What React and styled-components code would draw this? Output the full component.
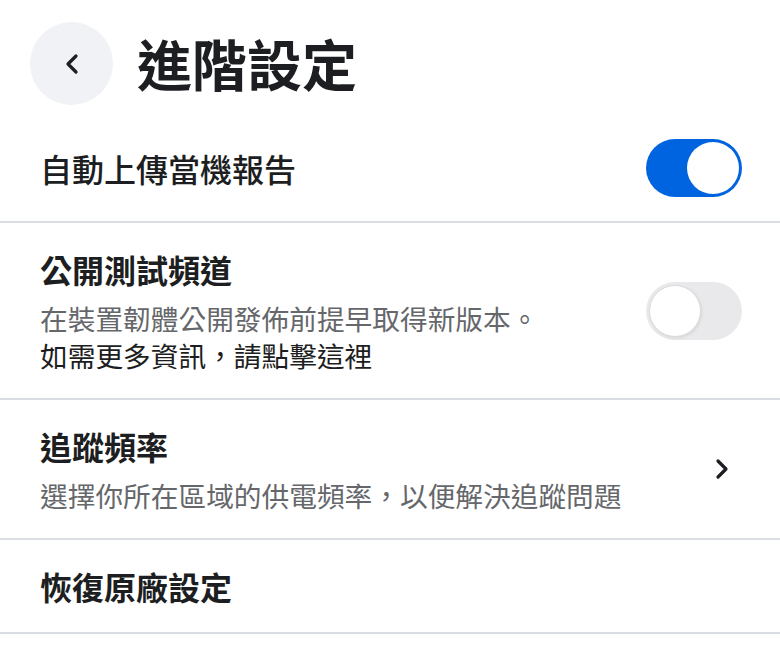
import React from 'react';
import styled, { createGlobalStyle } from 'styled-components';

const GlobalStyle = createGlobalStyle`
  html, body {
    margin: 0;
    padding: 0;
    background: #ffffff;
  }
  body {
    font-family: "Noto Sans CJK TC", "Noto Sans", sans-serif;
    color: #1c1e21;
  }
`;

const Page = styled.div`
  width: 780px;
  min-height: 651px;
  background: #ffffff;
`;

const Header = styled.header`
  display: flex;
  align-items: center;
  gap: 24px;
  padding: 22px 30px 10px;
`;

const BackButton = styled.button`
  width: 83px;
  height: 83px;
  border: none;
  border-radius: 50%;
  background: #f0f2f5;
  display: flex;
  align-items: center;
  justify-content: center;
  padding: 0;
  cursor: pointer;
`;

const Title = styled.h1`
  margin: 0;
  font-size: 55px;
  font-weight: 700;
  line-height: 1.2;
  color: #1c1e21;
  margin-top: -4px;
`;

const Row = styled.div`
  display: flex;
  align-items: center;
  justify-content: space-between;
  gap: 20px;
  padding: 24px 38px 24px 40px;
  border-bottom: 2px solid #dadde1;
`;

const Texts = styled.div`
  display: flex;
  flex-direction: column;
  min-width: 0;
`;

const RowTitle = styled.div`
  font-size: 32px;
  line-height: 44px;
  font-weight: ${props => props.weight || 700};
  color: #1c1e21;
`;

const RowSub = styled.div`
  margin-top: 9px;
  font-size: 27.7px;
  line-height: 37px;
  font-weight: 400;
  color: #65676b;
`;

const Line = styled.span`
  display: block;
  color: ${props => (props.strong ? '#1c1e21' : 'inherit')};
`;

const Toggle = styled.div`
  flex: none;
  width: 96px;
  height: 58px;
  border-radius: 29px;
  background: ${props => (props.on ? '#0064e0' : '#e9e9eb')};
  display: flex;
  align-items: center;
  justify-content: ${props => (props.on ? 'flex-end' : 'flex-start')};
  padding: 0 3px;
  box-sizing: border-box;
`;

const Knob = styled.div`
  width: 52px;
  height: 52px;
  border-radius: 50%;
  background: #ffffff;
  box-sizing: border-box;
  border: ${props => (props.on ? 'none' : '1.5px solid #dcdcde')};
  box-shadow: ${props => (props.on ? 'none' : '1px 1px 3px rgba(0, 0, 0, 0.08)')};
`;

const Chevron = styled.div`
  flex: none;
  width: 32px;
  display: flex;
  justify-content: center;
  margin-right: 4px;
`;

function SwitchControl({ on }) {
  return (
    <Toggle on={on}>
      <Knob on={on} />
    </Toggle>
  );
}

export default function App() {
  return (
    <>
      <GlobalStyle />
      <Page>
        <Header>
          <BackButton aria-label="back">
            <svg width="16" height="22" viewBox="0 0 16 22">
              <path d="M12 3 L4 11 L12 19" fill="none" stroke="#1c1e21" strokeWidth="3.2" strokeLinecap="round" strokeLinejoin="round" />
            </svg>
          </BackButton>
          <Title>進階設定</Title>
        </Header>

        <Row>
          <Texts>
            <RowTitle weight={500}>自動上傳當機報告</RowTitle>
          </Texts>
          <SwitchControl on />
        </Row>

        <Row>
          <Texts>
            <RowTitle>公開測試頻道</RowTitle>
            <RowSub>
              <Line>在裝置韌體公開發佈前提早取得新版本。</Line>
              <Line strong>如需更多資訊，請點擊這裡</Line>
            </RowSub>
          </Texts>
          <SwitchControl on={false} />
        </Row>

        <Row>
          <Texts>
            <RowTitle>追蹤頻率</RowTitle>
            <RowSub>選擇你所在區域的供電頻率，以便解決追蹤問題</RowSub>
          </Texts>
          <Chevron>
            <svg width="16" height="22" viewBox="0 0 16 22">
              <path d="M4 3 L12 11 L4 19" fill="none" stroke="#1c1e21" strokeWidth="3.2" strokeLinecap="round" strokeLinejoin="round" />
            </svg>
          </Chevron>
        </Row>

        <Row>
          <Texts>
            <RowTitle>恢復原廠設定</RowTitle>
          </Texts>
        </Row>
      </Page>
    </>
  );
}
